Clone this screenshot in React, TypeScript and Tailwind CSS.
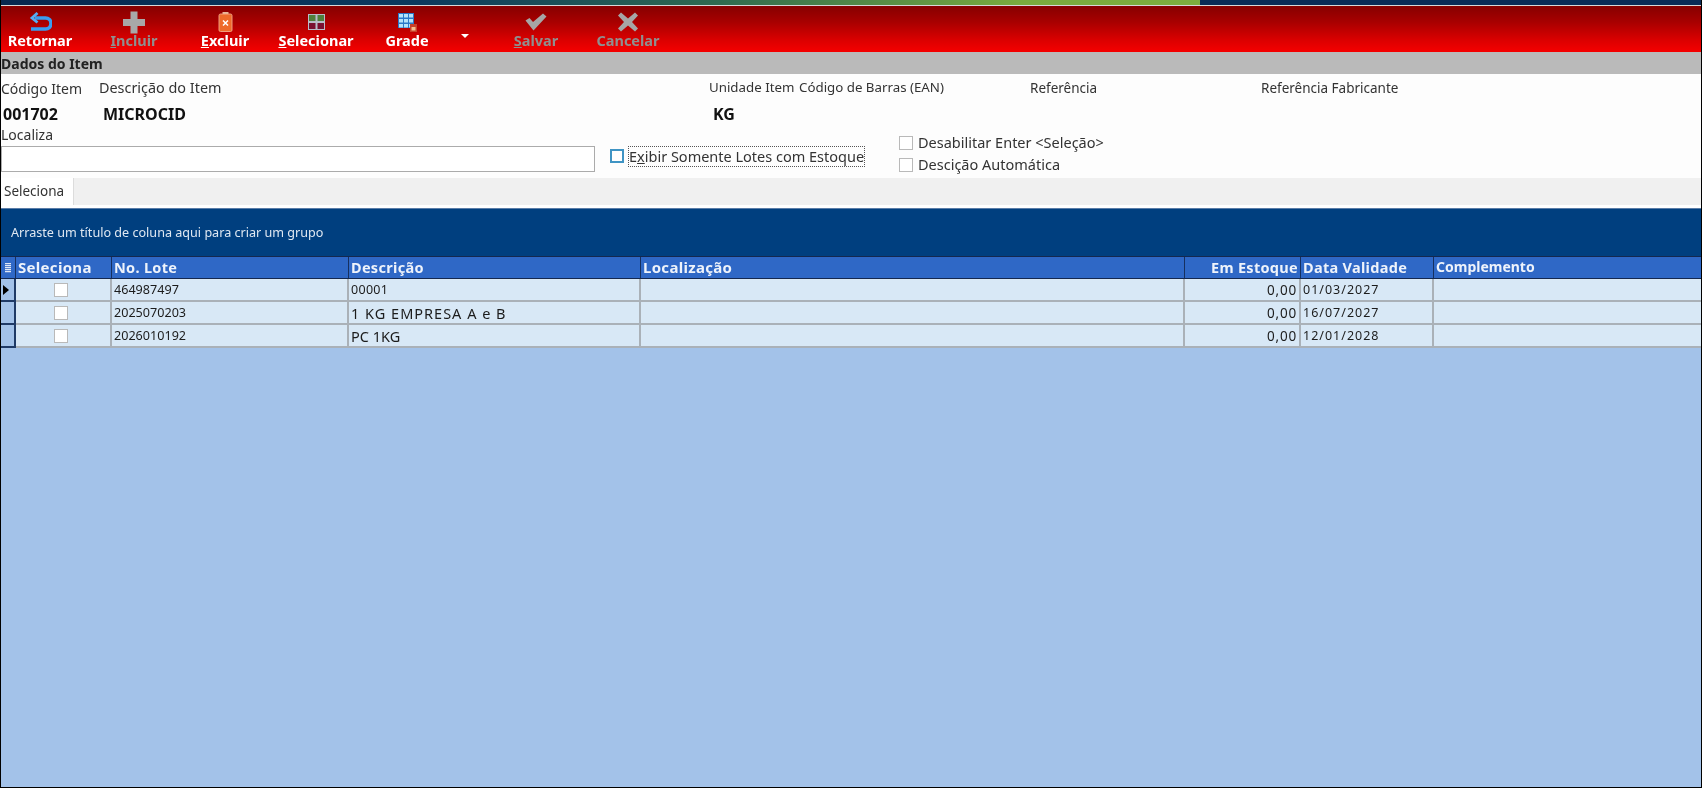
import React from "react";

const font = "font-['Noto_Sans','Open_Sans',sans-serif]";

function Retornar() {
  return (
    <svg width="23" height="20" viewBox="0 0 23 20" fill="none">
      <path d="M6 6h10.500a5 5 0 0 1 0 11H2" stroke="#3a9df0" strokeWidth="3.600" />
      <path d="M8.500 1 3 6l5.500 4.500" stroke="#55aef5" strokeWidth="2.800" fill="none" />
    </svg>
  );
}
function Incluir() {
  return (
    <svg width="24" height="23" viewBox="0 0 24 23">
      <path d="M8.500 0.500h7V8H23v7h-7.500v7.500h-7V15H1V8h7.500z" fill="#a8a8a8" />
    </svg>
  );
}
function Excluir() {
  return (
    <svg width="15" height="20" viewBox="0 0 15 20">
      <rect x="4.500" y="0" width="6" height="3" fill="#e8b898" />
      <rect x="1" y="2" width="13" height="17.500" rx="1.500" fill="#ee6a2a" stroke="#f4a888" strokeWidth="0.900" />
      <path d="M5 8.500l5 5m0-5l-5 5" stroke="#fff" strokeWidth="1.500" />
    </svg>
  );
}
function Selecionar() {
  return (
    <svg width="17" height="16" viewBox="0 0 17 16">
      <rect x="0" y="0" width="17" height="16" fill="#b9bcc8" />
      <rect x="1" y="1" width="6.500" height="6" fill="#4f7f3a" />
      <rect x="9.500" y="1" width="6.500" height="6" fill="#4f7f3a" />
      <rect x="1" y="9" width="6.500" height="6" fill="#7a1030" />
      <rect x="9.500" y="9" width="6.500" height="6" fill="#7a1030" />
    </svg>
  );
}
function Grade() {
  return (
    <svg width="19" height="19" viewBox="0 0 19 19">
      <rect x="0" y="0" width="16" height="15" fill="#2a78c8" />
      {[1, 6, 11].map((x) =>
        [1, 6, 11].map((y) => <rect key={`${x}-${y}`} x={x} y={y} width="4" height="3.500" fill="#b4e2fa" />)
      )}
      <rect x="12" y="11" width="7" height="8" fill="#c8402a" />
      <rect x="13.500" y="14" width="4" height="3.500" fill="#f4c090" />
    </svg>
  );
}
function Salvar() {
  return (
    <svg width="22" height="18" viewBox="0 0 22 18">
      <path d="M0.500 7.500l4-2.500 3.500 4L18 0.500l3.500 3L8.500 17.500z" fill="#a6a6a6" />
    </svg>
  );
}
function Cancelar() {
  return (
    <svg width="22" height="20" viewBox="0 0 22 20">
      <path d="M1 3.500l3-3 7 6L18 0.500l3 3-6 6.500 6 6.500-3 3-7-6-7 6-3-3 6-6.500z" fill="#a6a6a6" />
    </svg>
  );
}

function ToolButton({
  icon,
  label,
  ul,
  disabled,
  w,
}: {
  icon: React.ReactNode;
  label: string;
  ul?: boolean;
  disabled?: boolean;
  w: string;
}) {
  return (
    <div className={`flex h-[46px] flex-col items-center pt-[5px] ${w}`}>
      <div className="flex h-[22px] items-center justify-center">{icon}</div>
      <div
        className={`-mt-[2px] h-[19px] text-[14.500px] leading-[19px] font-bold whitespace-nowrap ${
          disabled ? "text-[#8f8f8f]" : "text-white"
        }`}
      >
        {ul ? (
          <>
            <span className="underline">{label[0]}</span>
            {label.slice(1)}
          </>
        ) : (
          label
        )}
      </div>
    </div>
  );
}

const cols = "grid grid-cols-[15px_96px_237px_292px_544px_116px_133px_1fr]";
const rows = [
  { lote: "464987497", desc: "00001", descCls: "text-[12.500px] tracking-[0.3px]", date: "01/03/2027" },
  { lote: "2025070203", desc: "1 KG EMPRESA A e B", descCls: "text-[14.500px] tracking-[1px]", date: "16/07/2027" },
  { lote: "2026010192", desc: "PC 1KG", descCls: "text-[14.500px]", date: "12/01/2028" },
];
const th =
  "flex items-center border-r border-[#16305f] px-[2px] pb-[1px] text-[14.500px] leading-[18px] font-bold tracking-[0.300px] text-[#eef3fb] whitespace-nowrap";
const td =
  "flex items-center border-r-2 border-b-2 border-[#aab1b8] px-[2px] pt-[1px] leading-[18px] text-[#1c1c1c] whitespace-nowrap";

function Check({ className = "" }: { className?: string }) {
  return <div className={`h-[14px] w-[14px] shrink-0 border border-[#b9b9b9] bg-white ${className}`} />;
}

export default function App() {
  return (
    <div
      className={`flex h-[788px] w-[1702px] flex-col overflow-hidden border-x border-b border-black bg-[#a3c2e9] text-[#333] blur-[0.5px] ${font}`}
    >
      {/* top strip */}
      <div className="flex h-[5px] shrink-0 bg-[#0a2c57]">
        <div className="h-full w-[1199px] bg-[linear-gradient(90deg,#06284f_0%,#0b3a5e_35%,#2f6b50_60%,#79ab3e_85%,#7cae3f_100%)]" />
      </div>
      <div className="h-[1px] shrink-0 bg-[#d8d8d8]" />

      {/* toolbar */}
      <div className="flex h-[46px] shrink-0 bg-[linear-gradient(180deg,#860000_0%,#a80000_35%,#dc0000_75%,#f50000_100%)]">
        <ToolButton w="w-[78px]" icon={<Retornar />} label="Retornar" />
        <ToolButton w="w-[110px]" icon={<Incluir />} label="Incluir" ul disabled />
        <ToolButton w="w-[72px]" icon={<Excluir />} label="Excluir" ul />
        <ToolButton w="w-[110px]" icon={<Selecionar />} label="Selecionar" ul />
        <ToolButton w="w-[72px]" icon={<Grade />} label="Grade" />
        <div className="w-[54px] pt-[28px] pl-[18px]">
          <div className="h-0 w-0 border-x-[4px] border-t-[4px] border-x-transparent border-t-white" />
        </div>
        <ToolButton w="w-[78px]" icon={<Salvar />} label="Salvar" ul disabled />
        <ToolButton w="w-[106px]" icon={<Cancelar />} label="Cancelar" disabled />
      </div>

      {/* section title */}
      <div className="flex h-[22px] shrink-0 items-center bg-[#bababa] pt-[1px] text-[14px] font-bold text-[#222]">
        Dados do Item
      </div>

      {/* fields */}
      <div className="flex h-[104px] shrink-0 flex-col bg-[#fdfdfd] pt-[6px] text-[13.300px]">
        <div className="flex h-[16px] shrink-0 items-center whitespace-nowrap">
          <div className="w-[98px] text-[14px]">Código Item</div>
          <div className="w-[610px] text-[14.400px]">Descrição do Item</div>
          <div className="w-[90px]">Unidade Item</div>
          <div className="w-[231px]">Código de Barras (EAN)</div>
          <div className="w-[231px] text-[13.500px]">Referência</div>
          <div className="text-[13.500px]">Referência Fabricante</div>
        </div>
        <div className="mt-[8px] flex h-[20px] shrink-0 items-center text-[16px] font-bold text-[#111]">
          <div className="w-[102px] pl-[2px]">001702</div>
          <div className="w-[610px]">MICROCID</div>
          <div>KG</div>
        </div>
        <div className="flex grow">
          <div className="flex w-[609px] flex-col pt-[4px]">
            <div className="h-[14px] text-[14px] leading-[14px]">Localiza</div>
            <div className="mt-[4px] h-[26px] w-[594px] border border-[#ababab] bg-white" />
          </div>
          <div className="flex h-[43px] w-[289px] items-start pt-[22px]">
            <div className="mt-[3px] h-[14px] w-[14px] border-2 border-[#3f94c4] bg-white" />
            <div className="ml-[4px] h-[21px] border border-dotted border-[#555] text-[14.500px] leading-[19px] whitespace-nowrap">
              E<span className="underline">x</span>ibir Somente Lotes com Estoque
            </div>
          </div>
          <div className="flex flex-col gap-[8px] pt-[12px] text-[14.500px]">
            <div className="flex h-[14px] items-center gap-[5px] whitespace-nowrap">
              <Check />
              Desabilitar Enter &lt;Seleção&gt;
            </div>
            <div className="flex h-[14px] items-center gap-[5px] whitespace-nowrap">
              <Check />
              Descição Automática
            </div>
          </div>
        </div>
      </div>

      {/* tabs */}
      <div className="flex h-[27px] shrink-0 bg-[#f0f0f0]">
        <div className="flex w-[73px] items-center border-r border-[#dcdcdc] bg-white pl-[3px] text-[13.500px] text-[#333]">
          Seleciona
        </div>
      </div>
      <div className="h-[3px] shrink-0 bg-white" />
      <div className="h-[1px] shrink-0 bg-[#5a7da8]" />

      {/* group panel */}
      <div className="flex h-[47px] shrink-0 items-center bg-[#003f7f] pt-[2px] pl-[10px] text-[12.600px] text-[#dfe8f2]">
        Arraste um título de coluna aqui para criar um grupo
      </div>

      {/* grid */}
      <div className="flex grow flex-col">
        <div className={`${cols} h-[23px] shrink-0 border-y border-[#14284f] bg-[#2f68c6]`}>
          <div className="flex items-center justify-center border-r border-[#16305f]">
            <div className="h-[10px] w-[6px] bg-[repeating-linear-gradient(180deg,#dfe8f6_0px,#dfe8f6_1px,#5f87d0_1px,#5f87d0_2px)]" />
          </div>
          <div className={`${th} text-[15px]`}>Seleciona</div>
          <div className={th}>No. Lote</div>
          <div className={th}>Descrição</div>
          <div className={`${th} text-[15px]`}>Localização</div>
          <div className={`${th} justify-end`}>Em Estoque</div>
          <div className={th}>Data Validade</div>
          <div className="flex items-center px-[2px] pb-[1px] text-[14px] leading-[18px] font-bold text-[#eef3fb]">
            Complemento
          </div>
        </div>
        {rows.map((r, i) => (
          <div key={r.lote} className={`${cols} h-[23px] shrink-0 bg-[#d8e8f6]`}>
            <div className="flex items-center border-r-2 border-b-2 border-[#1f3a66] bg-[#a3c2e9] pl-[2px]">
              {i === 0 && <div className="h-0 w-0 border-y-[5px] border-l-[6px] border-y-transparent border-l-black" />}
            </div>
            <div className={`${td} justify-center pr-[6px]`}>
              <Check />
            </div>
            <div className={`${td} text-[12.600px]`}>{r.lote}</div>
            <div className={`${td} ${r.descCls}`}>{r.desc}</div>
            <div className={td} />
            <div className={`${td} justify-end text-[13.500px] tracking-[0.800px]`}>0,00</div>
            <div className={`${td} text-[12.500px] tracking-[1px]`}>{r.date}</div>
            <div className="border-b-2 border-[#aab1b8]" />
          </div>
        ))}
      </div>
    </div>
  );
}
